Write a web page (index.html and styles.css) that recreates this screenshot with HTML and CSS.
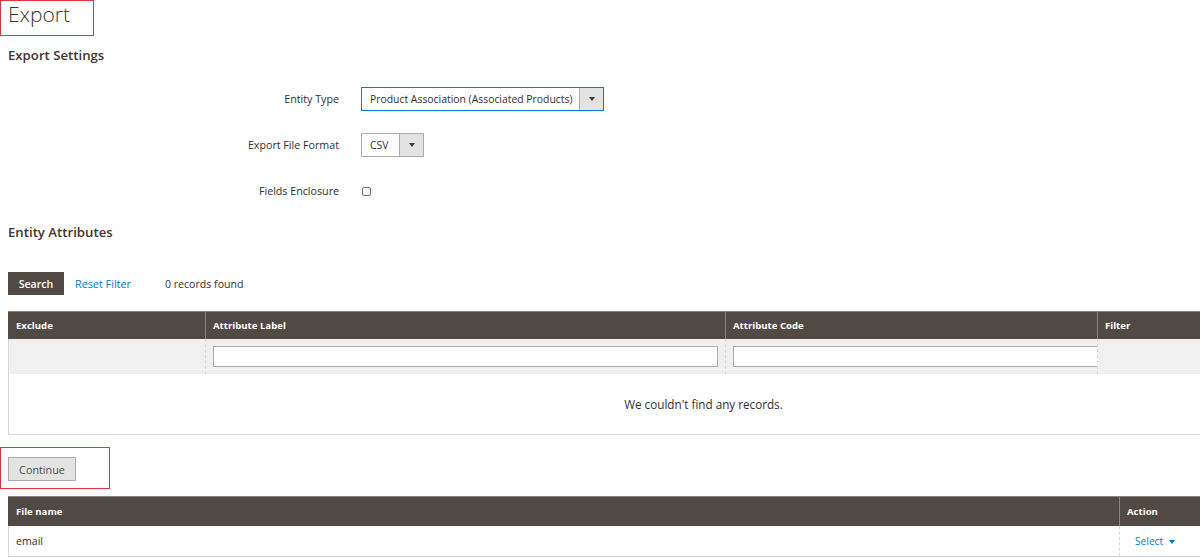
FILE: index.html
```html
<!DOCTYPE html>
<html>
<head>
<meta charset="utf-8">
<link rel="stylesheet" href="styles.css">
</head>
<body>
<div class="page">
  <div class="page-title"><h1>Export</h1></div>
  <div class="content">
    <h2 class="section-title settings-title">Export Settings</h2>
    <div class="form">
      <div class="form-row">
        <label class="form-label">Entity Type</label>
        <div class="select select-focus select-entity">
          <span class="select-value">Product Association (Associated Products)</span>
          <span class="select-arrow"><i class="caret"></i></span>
        </div>
      </div>
      <div class="form-row">
        <label class="form-label">Export File Format</label>
        <div class="select select-format">
          <span class="select-value">CSV</span>
          <span class="select-arrow"><i class="caret"></i></span>
        </div>
      </div>
      <div class="form-row">
        <label class="form-label">Fields Enclosure</label>
        <div class="checkbox-wrap"><span class="checkbox"></span></div>
      </div>
    </div>
    <h2 class="section-title attrs-title">Entity Attributes</h2>
    <div class="toolbar">
      <button class="btn-search">Search</button>
      <a class="reset-link">Reset Filter</a>
      <span class="records">0 records found</span>
    </div>
  </div>
  <div class="table-clip">
    <table class="grid grid-attrs">
      <thead>
        <tr>
          <th class="col-exclude">Exclude</th>
          <th class="col-label">Attribute Label</th>
          <th class="col-code">Attribute Code</th>
          <th class="col-filter">Filter</th>
        </tr>
      </thead>
      <tbody>
        <tr class="filter-row">
          <td></td>
          <td><div class="filter-input"></div></td>
          <td><div class="filter-input filter-input-open"></div></td>
          <td></td>
        </tr>
        <tr class="empty-row">
          <td colspan="4">We couldn't find any records.</td>
        </tr>
      </tbody>
    </table>
  </div>
  <div class="continue-box">
    <button class="btn-continue">Continue</button>
  </div>
  <div class="table-clip files-clip">
    <table class="grid grid-files">
      <thead>
        <tr>
          <th class="col-file">File name</th>
          <th class="col-action">Action</th>
        </tr>
      </thead>
      <tbody>
        <tr class="file-row">
          <td>email</td>
          <td class="action-cell"><a class="action-select">Select <i class="caret caret-blue"></i></a></td>
        </tr>
      </tbody>
    </table>
  </div>
</div>
</body>
</html>
```

FILE: styles.css
```css
* { box-sizing: border-box; }
html, body {
  margin: 0;
  padding: 0;
  background: #fff;
  overflow: hidden;
}
body {
  font-family: "Open Sans", "Liberation Sans", sans-serif;
  color: #303030;
  font-size: 12px;
  width: 1200px;
  height: 557px;
}
.page { overflow: hidden; width: 1200px; height: 557px; }
.page-title {
  width: 94px;
  height: 36px;
  border: 1px solid #e8323a;
  padding-left: 7px;
}
.page-title h1 {
  margin: 0;
  font-size: 21px;
  font-weight: 300;
  line-height: 27px;
  color: #41362f;
}
.content {
  padding-left: 8px;
}
.section-title {
  margin: 0;
  font-size: 13.2px;
  font-weight: 600;
  line-height: 20px;
  color: #41362f;
}
.settings-title { margin-top: 9px; }
.form {
  margin-top: 22px;
  display: flex;
  flex-direction: column;
  gap: 22px;
}
.form-row {
  display: grid;
  grid-template-columns: 331px auto;
  column-gap: 22px;
  align-items: center;
  height: 24px;
}
.form-label {
  text-align: right;
  font-size: 10.7px;
  color: #303030;
}
.select {
  display: inline-flex;
  height: 24px;
  border: 1px solid #adadad;
  background: #fff;
  justify-self: start;
}
.select-focus { border-color: #007bdb; }
.select-entity { width: 243px; }
.select-format { width: 63px; }
.select-value {
  flex: 1;
  padding-left: 8px;
  line-height: 22px;
  font-size: 10.4px;
  color: #303030;
  white-space: nowrap;
}
.select-arrow {
  width: 24px;
  background: #e3e3e3;
  border-left: 1px solid #adadad;
  display: flex;
  align-items: center;
  justify-content: center;
}
.caret {
  display: inline-block;
  width: 0;
  height: 0;
  border-left: 3px solid transparent;
  border-right: 3px solid transparent;
  border-top: 4px solid #41362f;
}
.checkbox-wrap { display: flex; align-items: center; padding-left: 1px; }
.checkbox {
  width: 9px;
  height: 9px;
  border: 1px solid #707070;
  border-radius: 2px;
  background: #fff;
}
.attrs-title { margin-top: 19px; }
.toolbar {
  margin-top: 30px;
  display: flex;
  align-items: center;
  height: 23px;
}
.btn-search {
  width: 56px;
  height: 23px;
  border: 0;
  background: #514943;
  color: #fff;
  font-family: inherit;
  font-size: 10.6px;
  font-weight: 600;
  padding: 0;
}
.reset-link {
  margin-left: 11px;
  color: #007bdb;
  font-size: 10.8px;
}
.records {
  margin-left: 34px;
  font-size: 10.6px;
  color: #303030;
}
.table-clip {
  margin-top: 16px;
  padding-left: 8px;
  width: 1400px;
}
.grid {
  border-collapse: collapse;
  table-layout: fixed;
  width: 1391px;
}
.grid th {
  background: #514943;
  color: #fff;
  font-size: 9.6px;
  font-weight: 700;
  text-align: left;
  padding: 0 7px;
  height: 27px;
  border-left: 1px solid #8a837f;
  border-right: 1px solid #8a837f;
  border-top: 1px solid #8a837f;
}
.grid th:first-child { border-left-color: #514943; }
.col-exclude { width: 197px; }
.col-label { width: 520px; }
.col-code { width: 372px; }
.filter-row td {
  background: #f0f0f0;
  height: 35px;
  border-left: 1px dashed #d6d6d6;
  border-right: 1px dashed #d6d6d6;
  padding: 0 0 0 7px;
  vertical-align: middle;
}
.filter-row td:first-child { border-left: 1px solid #d6d6d6; }
.filter-input {
  height: 21px;
  width: 505px;
  background: #fff;
  border: 1px solid #adadad;
}
.filter-input-open { width: 370px; border-right: 0; }
.empty-row td {
  height: 61px;
  text-align: center;
  font-size: 11.7px;
  color: #303030;
  border: 1px solid #d6d6d6;
  border-top: 0;
}
.continue-box {
  margin-top: 12px;
  width: 110px;
  height: 42px;
  border: 1px solid #e8323a;
  padding: 9px 0 0 7px;
}
.btn-continue {
  width: 68px;
  height: 24px;
  background: #e3e3e3;
  border: 1px solid #adadad;
  color: #514943;
  font-family: inherit;
  font-size: 10.8px;
  padding: 0;
}
.files-clip { margin-top: 7px; }
.grid-files { width: 1200px; }
.grid-files th { height: 29px; }
.col-file { width: 1111px; }
.file-row td {
  height: 31px;
  font-size: 10.6px;
  color: #303030;
  padding: 0 7px;
  border-bottom: 1px solid #d6d6d6;
  border-left: 1px solid #d6d6d6;
}
.file-row td.action-cell {
  border-left: 1px dashed #d6d6d6;
  padding-left: 15px;
}
.action-select {
  color: #007bdb;
  font-size: 10.2px;
}
.caret-blue {
  border-top-color: #007bdb;
  vertical-align: middle;
  margin-left: 3px;
}
```
